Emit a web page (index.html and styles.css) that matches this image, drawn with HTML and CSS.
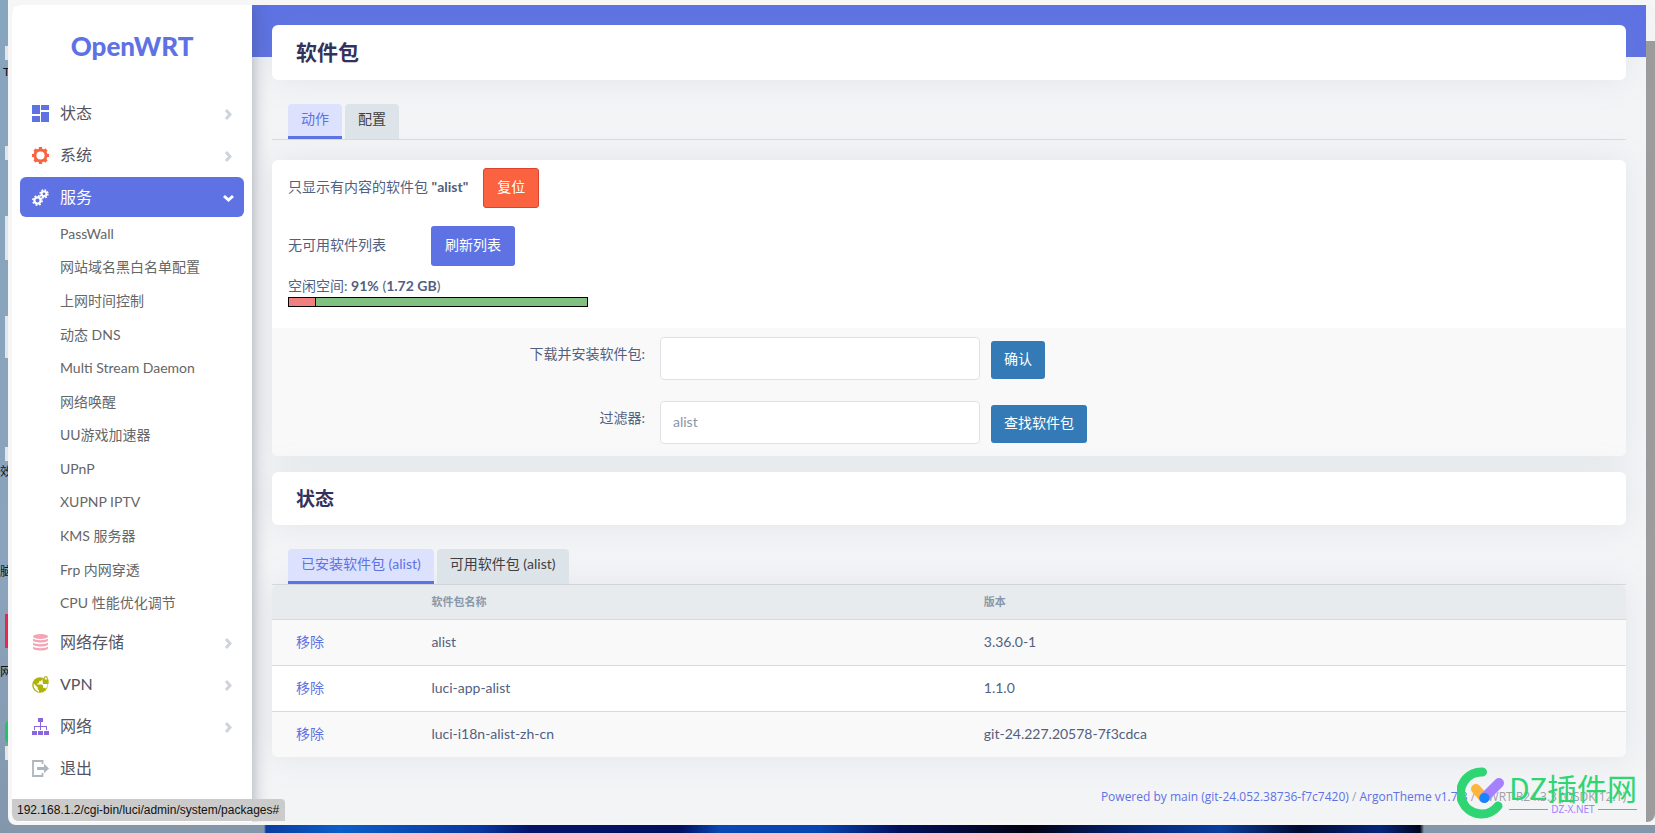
FILE: index.html
```html
<!DOCTYPE html>
<html lang="zh-CN">
<head>
<meta charset="utf-8">
<title>OpenWRT - 软件包</title>
<link rel="stylesheet" href="styles.css">
</head>
<body>
<div class="desktop">
  <div class="desktop-icons" aria-hidden="true">
    <i class="tile t1"></i><i class="tile t2"></i><i class="tile t3"></i><i class="tile t4"></i><i class="tile t5"></i>
    <i class="tile t6"></i><i class="tile red"></i><i class="tile green"></i>
    <span class="name n1">T</span><span class="name n2">效</span><span class="name n3">脑</span><span class="name n4">网</span>
  </div>
  <div class="window">
    <div class="page">
      <aside class="sidebar">
        <a class="brand" href="#">OpenWRT</a>
        <nav>
          <ul class="menu">
            <li><a class="item" href="#">
              <svg class="icon" viewBox="0 0 17 17" fill="#5e72e4"><path d="M0 0h8v9H0zM0 11h8v6H0zM9 0h8v5H9zM9 7h8v10H9z"/></svg>
              <span>状态</span><svg class="chev" viewBox="0 0 8 11"><path d="M2 1l4 4.500-4 4.500"/></svg></a></li>
            <li><a class="item" href="#">
              <svg class="icon" viewBox="0 0 17 17" fill="none" stroke="#fb6340"><circle cx="8.500" cy="8.500" r="5.600" stroke-width="3"/><path d="M8.500 0v3M8.500 14v3M0 8.500h3M14 8.500h3M2.500 2.500l2 2M12.500 12.500l2 2M2.500 14.500l2-2M12.500 4.500l2-2" stroke-width="3.200"/></svg>
              <span>系统</span><svg class="chev" viewBox="0 0 8 11"><path d="M2 1l4 4.500-4 4.500"/></svg></a></li>
            <li><a class="item active" href="#">
              <svg class="icon" viewBox="0 0 17 17" fill="none" stroke="#fff"><circle cx="5.500" cy="11.500" r="3.100" stroke-width="2.200"/><circle cx="5.500" cy="11.500" r="4.600" stroke-width="1.700" stroke-dasharray="1.800 1.810"/><circle cx="12" cy="4.800" r="2.400" stroke-width="2"/><circle cx="12" cy="4.800" r="3.900" stroke-width="1.600" stroke-dasharray="1.750 1.310"/></svg>
              <span>服务</span><svg class="chev down" viewBox="0 0 11 9"><path d="M1 2l4.500 4L10 2"/></svg></a>
              <ul class="submenu">
                <li><a href="#">PassWall</a></li>
                <li><a href="#">网站域名黑白名单配置</a></li>
                <li><a href="#">上网时间控制</a></li>
                <li><a href="#">动态 DNS</a></li>
                <li><a href="#">Multi Stream Daemon</a></li>
                <li><a href="#">网络唤醒</a></li>
                <li><a href="#">UU游戏加速器</a></li>
                <li><a href="#">UPnP</a></li>
                <li><a href="#">XUPNP IPTV</a></li>
                <li><a href="#">KMS 服务器</a></li>
                <li><a href="#">Frp 内网穿透</a></li>
                <li><a href="#">CPU 性能优化调节</a></li>
              </ul></li>
            <li><a class="item" href="#">
              <svg class="icon" viewBox="0 0 17 17"><g fill="#f3a4b5"><ellipse cx="8.500" cy="2.500" rx="7.500" ry="2.500"/><path d="M1 4.400c2 2.300 13 2.300 15 0v1.800c0 3-15 3-15 0zM1 8.400c2 2.300 13 2.300 15 0v1.800c0 3-15 3-15 0zM1 12.400c2 2.300 13 2.300 15 0v1.800c0 3-15 3-15 0z"/></g></svg>
              <span>网络存储</span><svg class="chev" viewBox="0 0 8 11"><path d="M2 1l4 4.500-4 4.500"/></svg></a></li>
            <li><a class="item" href="#">
              <svg class="icon" viewBox="0 0 17 17"><circle cx="8" cy="9" r="7.800" fill="#adb30a"/><path d="M1.700 7.500l4 4v1.700l1.300 1v1.500C3.500 15 1.200 11.500 1.700 7.500zM10 1.700v2L8.500 5.200H7v2H5.300v1.300H10l1 1v2.300h1.700l1 1c1.500-1.600 1.900-3.600 1.700-5.100L11 8z" fill="#fff"/><path d="M11 3.500h.8V2.200c0-2.900 4-2.900 4 0v1.300h.8V8H11z" fill="#adb30a"/><path d="M12.800 3.500V2.300c0-1.400 2-1.400 2 0v1.200z" fill="#fff"/></svg>
              <span>VPN</span><svg class="chev" viewBox="0 0 8 11"><path d="M2 1l4 4.500-4 4.500"/></svg></a></li>
            <li><a class="item" href="#">
              <svg class="icon" viewBox="0 0 17 17" fill="#8965e0"><path d="M6 0h5v4H6zM0 13h5v4H0zM6 13h5v4H6zM12 13h5v4h-5zM8 4h1v4h6v4h-1V9H9v3H8V9H3v3H2V8h6z"/></svg>
              <span>网络</span><svg class="chev" viewBox="0 0 8 11"><path d="M2 1l4 4.500-4 4.500"/></svg></a></li>
            <li><a class="item" href="#">
              <svg class="icon" viewBox="0 0 17 17"><path d="M10.500 4V1H1v15h9.500v-3" fill="none" stroke="#adb5bd" stroke-width="1.800"/><path d="M5 7h7V3.800l5 4.700-5 4.700V10H5z" fill="#adb5bd"/></svg>
              <span>退出</span></a></li>
          </ul>
        </nav>
      </aside>
      <main class="main">
        <div class="band"></div>
        <div class="content">
          <h2 class="card title">软件包</h2>
          <ul class="tabs">
            <li><a class="tab on" href="#">动作</a></li>
            <li><a class="tab" href="#">配置</a></li>
          </ul>
          <section class="card actions">
            <div class="notes">
              <div class="line"><span>只显示有内容的软件包 <b>"alist"</b></span><button class="btn reset">复位</button></div>
              <div class="line refresh-line"><span>无可用软件列表</span><button class="btn refresh">刷新列表</button></div>
              <div class="space">空闲空间: <b>91%</b> (<b>1.72 GB</b>)</div>
              <div class="bar"><div class="used" style="width:9%"></div></div>
            </div>
            <form class="form">
              <label for="url">下载并安装软件包:</label>
              <div class="field"><input id="url" type="text"><button class="btn blue" type="button">确认</button></div>
              <label for="query">过滤器:</label>
              <div class="field"><input id="query" type="text" value="alist"><button class="btn blue" type="button">查找软件包</button></div>
            </form>
          </section>
          <h3 class="card subtitle">状态</h3>
          <ul class="tabs">
            <li><a class="tab on" href="#">已安装软件包 (alist)</a></li>
            <li><a class="tab" href="#">可用软件包 (alist)</a></li>
          </ul>
          <table class="packages">
            <thead><tr><th class="c-act"></th><th class="c-name">软件包名称</th><th>版本</th></tr></thead>
            <tbody>
              <tr><td><a href="#">移除</a></td><td>alist</td><td>3.36.0-1</td></tr>
              <tr><td><a href="#">移除</a></td><td>luci-app-alist</td><td>1.1.0</td></tr>
              <tr><td><a href="#">移除</a></td><td>luci-i18n-alist-zh-cn</td><td>git-24.227.20578-7f3cdca</td></tr>
            </tbody>
          </table>
          <footer class="footer"><a href="#">Powered by main (git-24.052.38736-f7c7420)</a> / <a href="#">ArgonTheme v1.7.3</a> / QWRT R24.3.3 (QSDK 12.1)</footer>
        </div>
      </main>
      <div class="scroll"><div class="thumb"></div></div>
      <div class="status">192.168.1.2/cgi-bin/luci/admin/system/packages#</div>
    </div>
  </div>
  <div class="mark">
    <svg class="mark-logo" viewBox="0 0 48 52" fill="none" stroke-linecap="round"><path d="M25.500 5A21 21 0 1 0 41 39" stroke="#2fd573" stroke-width="9"/><path d="M19 22l8 9" stroke="#ffb53c" stroke-width="10"/><path d="M42 16L27 31" stroke="#a580ff" stroke-width="10"/><circle cx="27.500" cy="31" r="5" fill="#1684fc"/></svg>
    <div class="mark-text"><div class="mark-name">DZ插件网</div><div class="mark-site">DZ-X.NET</div></div>
  </div>
</div>
</body>
</html>
```
FILE: styles.css
```css
* { box-sizing: border-box; }
body {
  margin: 0;
  font: 14px/20px Lato, "Noto Sans CJK SC", sans-serif;
  color: #525f7f;
}
ul { list-style: none; margin: 0; padding: 0; }
a { color: #5e72e4; text-decoration: none; }
.desktop {
  position: relative;
  min-height: 100vh;
  display: flex;
  padding: 0 0 8px 8px;
  overflow: hidden;
  background:
    linear-gradient(90deg, #8496a9 0, #8496a9 264px, #0a3da0 266px, #0b5fc8 340px, #08389f 480px, #03146a 530px, #021060 680px, #0a48b4 720px, #0646b0 820px, #02105c 900px, #020212 1030px, #04206c 1120px, #0a3fa0 1220px, #010a30 1300px, #06267c 1380px, #01061f 1420px, #8496a9 1424px, #8496a9 100%) 0 100% / 100% 8px no-repeat,
    linear-gradient(#86a5bf, #8ba3bc 70%, #8297ad);
}
.tile, .name { position: absolute; left: 5px; }
.tile { width: 6px; height: 14px; background: #e3e5e8; }
.t1 { top: 46px; }
.t2 { top: 146px; }
.t3 { top: 216px; height: 44px; }
.t4 { top: 316px; height: 42px; }
.t5 { top: 447px; }
.t6 { top: 746px; }
.red { top: 614px; height: 34px; background: #e5284f; }
.green { top: 720px; height: 24px; background: #1fc468; border-radius: 12px 0 0 12px; }
.name { left: 0; font-size: 12px; line-height: 14px; color: #111; }
.n1 { top: 65px; left: 3px; }
.n2 { top: 465px; }
.n3 { top: 565px; }
.n4 { top: 665px; }

.window {
  position: relative;
  flex: 1;
  display: flex;
  padding: 5px 0 3px 4px;
  background: #f6f6f6;
  border-radius: 0 0 0 8px;
}
.page {
  position: relative;
  flex: 1;
  display: flex;
  min-width: 0;
  background: #f3f4f6;
  border-radius: 8px;
  overflow: hidden;
}
.sidebar {
  position: relative;
  flex: 0 0 240px;
  padding: 0 8px;
  background: #fff;
  box-shadow: 0 0 16px rgba(60, 70, 90, .45);
  z-index: 1;
}
.brand {
  display: block;
  height: 87px;
  line-height: 82px;
  text-align: center;
  font-size: 26px;
  font-weight: 900;
}
.menu > li { padding: 1px 0; }
.item {
  display: flex;
  align-items: center;
  gap: 11px;
  height: 40px;
  padding: 0 12px;
  border-radius: 6px;
  font-size: 16px;
  color: #525461;
}
.item span { flex: 1; }
.item.active { background: #5e72e4; color: #fff; }
.icon { width: 17px; height: 17px; }
.chev { width: 8px; height: 11px; margin-top: 3px; fill: none; stroke: #ced4da; stroke-width: 3; }
.chev.down { width: 11px; height: 9px; margin-right: -2px; stroke: #fff; }
.submenu { display: grid; grid-auto-rows: 1fr; height: 403px; }
.submenu a { display: flex; align-items: center; height: 100%; padding-left: 40px; color: #666; }

.main { position: relative; flex: 1; min-width: 0; }
.band { position: absolute; top: 0; left: 0; right: 0; height: 52px; background: #5e72e4; }
.content { position: relative; padding: 20px 20px 0; }
.card {
  margin: 0;
  background: #fff;
  border-radius: 6px;
  box-shadow: 0 0 32px rgba(136, 152, 170, .15);
}
.title, .subtitle { color: #32325d; font-weight: 700; padding: 0 24px; }
.title { font-size: 21px; line-height: 53px; padding-bottom: 2px; }
.subtitle { font-size: 19px; line-height: 53px; margin-top: 16px; }
.tabs { display: flex; gap: 3px; padding: 24px 16px 0; border-bottom: 1px solid #d8dadd; }
.tab {
  display: block;
  height: 35px;
  padding: 5px 13px 0;
  border-radius: 4px 4px 0 0;
  background: #dce3e9;
  color: #404040;
}
.tab.on { background: #dce1fe; color: #5e72e4; border-bottom: 3px solid #5e72e4; }
.actions { margin-top: 20px; overflow: hidden; }
.notes { padding: 8px 16px 21px; }
.line { display: flex; align-items: center; gap: 15px; height: 40px; }
.line span { padding-bottom: 2px; }
.refresh-line { margin-top: 18px; gap: 45px; }
.btn {
  height: 40px;
  padding: 0 13px 2px;
  border: 0;
  border-radius: 3px;
  font: 14px/20px Lato, "Noto Sans CJK SC", sans-serif;
  color: #fff;
}
.reset { background: #fb6340; border: 1px solid #d9432f; }
.refresh { background: #5e72e4; padding: 0 14px 2px; }
.blue { height: 38px; margin-top: 2px; background: #337ab7; }
.space { margin-top: 10px; }
.bar { width: 300px; height: 10px; margin-top: 1px; border: 1px solid #000; background: #80c080; }
.used { height: 100%; background: #f08080; border-right: 1px solid #000; }
.form {
  display: grid;
  grid-template-columns: 373fr 966fr;
  column-gap: 15px;
  row-gap: 21px;
  padding: 9px 0 12px;
  background: #f9f9f9;
}
.form label { text-align: right; padding-top: 7px; }
.field { display: flex; align-items: center; gap: 11px; }
.field input {
  width: 320px;
  height: 43px;
  padding: 0 12px 2px;
  border: 1px solid #dee2e6;
  border-radius: 4px;
  background: #fff;
  font: inherit;
  color: #8898aa;
}
.packages {
  width: 100%;
  border-collapse: separate;
  border-spacing: 0;
  table-layout: fixed;
  border-radius: 6px;
  overflow: hidden;
  box-shadow: 0 0 32px rgba(136, 152, 170, .15);
}
.packages th {
  height: 34px;
  padding: 0 24px;
  background: #e7ebee;
  color: #8898aa;
  font-size: 11px;
  line-height: 16px;
  text-align: left;
}
.c-act { width: 10%; }
.c-name { width: 40.8%; }
.packages td { height: 46px; padding: 0 24px 2px; border-top: 1px solid #d8dadd; background: #f9f9f9; }
.packages tr:nth-child(even) td { background: #fff; }
.footer { padding: 30px 0 12px; text-align: right; font: 12px/20px "Open Sans", sans-serif; color: #a0a0a8; }
.scroll { flex: 0 0 9px; padding-top: 36px; background: #f3f4f6; display: flex; }
.thumb { flex: 1; background: #9c9c9c; }
.status {
  position: absolute;
  left: 0;
  bottom: 1px;
  z-index: 2;
  padding: 0 6px 0 5px;
  border-radius: 0 4px 0 6px;
  background: #cbcbcb;
  color: #111;
  font: 12px/22px "Liberation Sans", sans-serif;
}
.mark {
  position: absolute;
  right: 18px;
  bottom: 14px;
  z-index: 3;
  display: flex;
  gap: 4px;
  align-items: center;
}
.mark-logo { width: 48px; height: 52px; }
.mark-name { font: 30px/32px "Noto Sans CJK SC", sans-serif; color: #2fd573; }
.mark-site { display: flex; align-items: center; gap: 3px; font: 10px/12px "Noto Sans", sans-serif; color: #a580ff; }
.mark-site::before, .mark-site::after { content: ""; flex: 1; height: 1px; background: #a580ff; }
```
